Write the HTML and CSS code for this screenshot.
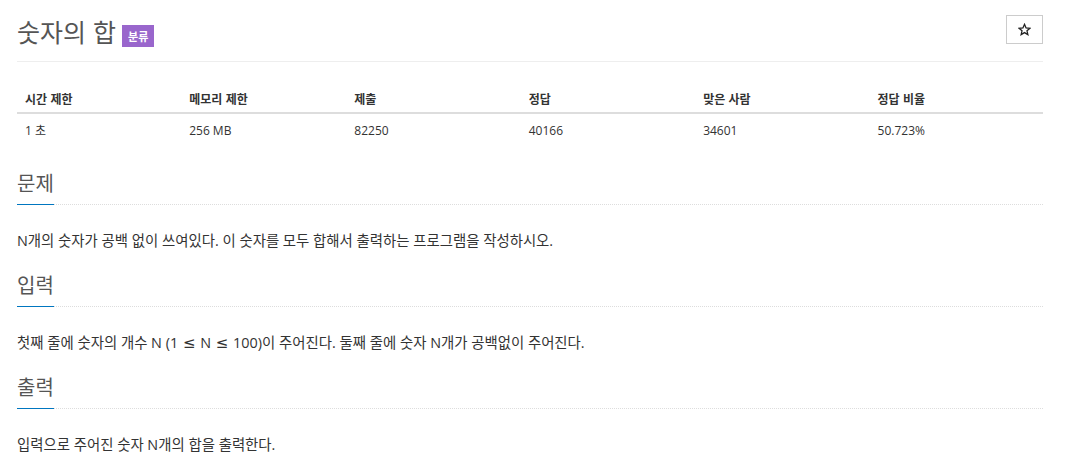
FILE: index.html
```html
<!DOCTYPE html>
<html lang="ko">
<head>
<meta charset="utf-8">
<link rel="stylesheet" href="styles.css">
</head>
<body>
<div class="page">
  <div class="page-header">
    <h1 class="title"><span class="title-text">숫자의 합</span><span class="label">분류</span></h1>
    <button class="star-btn" type="button" aria-label="star">
      <svg width="13" height="13" viewBox="0 0 24 24"><path d="M12 2.5l2.9 6.6 7.1.6-5.4 4.7 1.6 7-6.2-3.7-6.2 3.7 1.6-7L2 9.7l7.1-.6z" fill="none" stroke="#222" stroke-width="2.4" stroke-linejoin="miter"/></svg>
    </button>
  </div>
  <table class="info">
    <thead>
      <tr>
        <th class="c1">시간 제한</th>
        <th class="c2">메모리 제한</th>
        <th class="c3">제출</th>
        <th class="c4">정답</th>
        <th class="c5">맞은 사람</th>
        <th class="c6">정답 비율</th>
      </tr>
    </thead>
    <tbody>
      <tr>
        <td>1 초</td>
        <td>256 MB</td>
        <td>82250</td>
        <td>40166</td>
        <td>34601</td>
        <td>50.723%</td>
      </tr>
    </tbody>
  </table>

  <section class="section">
    <div class="headline"><h2>문제</h2></div>
    <p class="text">N개의 숫자가 공백 없이 쓰여있다. 이 숫자를 모두 합해서 출력하는 프로그램을 작성하시오.</p>
  </section>
  <section class="section">
    <div class="headline"><h2>입력</h2></div>
    <p class="text">첫째 줄에 숫자의 개수 N (1 <span class="math">≤</span> N <span class="math">≤</span> 100)이 주어진다. 둘째 줄에 숫자 N개가 공백없이 주어진다.</p>
  </section>
  <section class="section">
    <div class="headline"><h2>출력</h2></div>
    <p class="text">입력으로 주어진 숫자 N개의 합을 출력한다.</p>
  </section>
</div>
</body>
</html>
```

FILE: styles.css
```css
html, body {
  margin: 0;
  padding: 0;
  background: #fff;
}
body {
  font-family: "Open Sans", "Noto Sans CJK KR", sans-serif;
  color: #333;
  font-size: 14px;
}
.page {
  width: 1026px;
  margin-left: 17px;
}
.page-header {
  display: flex;
  justify-content: space-between;
  align-items: flex-start;
  padding-top: 15px;
  height: 46px;
  border-bottom: 1px solid #eee;
}
.title {
  margin: 0;
  font-weight: 400;
  font-size: 25px;
  line-height: 32px;
  color: #555;
  display: flex;
  align-items: center;
}
.title-text {
  font-family: "Noto Sans CJK KR", sans-serif;
  font-weight: 400;
}
.label {
  display: block;
  margin-left: 6px;
  margin-top: 9px;
  height: 22px;
  background: #9966cc;
  color: #fff;
  font-size: 11px;
  font-weight: 700;
  line-height: 22px;
  padding: 0 6px;
  font-family: "Noto Sans CJK KR", sans-serif;
}
.star-btn {
  width: 37px;
  height: 29px;
  border: 1px solid #ccc;
  background: #fff;
  padding: 0;
  display: flex;
  align-items: center;
  justify-content: center;
}
.star-btn svg {
  display: block;
  margin-top: -1px;
}
.info {
  width: 100%;
  border-collapse: collapse;
  margin-top: 20px;
  font-size: 12px;
}
.info th {
  text-align: left;
  font-weight: 700;
  color: #333;
  padding: 8px 8px 5px;
  line-height: 17px;
  border-bottom: 2px solid #ddd;
  font-family: "Noto Sans CJK KR", sans-serif;
}
.info td {
  padding: 8px 8px 7px;
  line-height: 17px;
  color: #333;
}
.c1 { width: 16%; }
.c2 { width: 16.1%; }
.c3 { width: 17%; }
.c4 { width: 17%; }
.c5 { width: 17%; }
.info th.c6 { width: auto; }
.section {
  margin-top: 23px;
}
.section + .section {
  margin-top: 20px;
}
.headline {
  border-bottom: 1px dotted #ddd;
  height: 36px;
  box-sizing: border-box;
}
.headline h2 {
  display: inline-block;
  margin: 0;
  font-size: 20px;
  font-weight: 400;
  line-height: 28px;
  color: #555;
  font-family: "Noto Sans CJK KR", sans-serif;
  border-bottom: 1px solid #0076c0;
  padding-bottom: 7px;
}
.text {
  margin: 26px 0 0;
  font-size: 14.4px;
  line-height: 20px;
  color: #333;
  font-family: "Open Sans", "Noto Sans CJK KR", sans-serif;
}
.math {
  font-family: "DejaVu Sans", sans-serif;
  font-size: 15px;
  padding: 0 1px;
}
```
